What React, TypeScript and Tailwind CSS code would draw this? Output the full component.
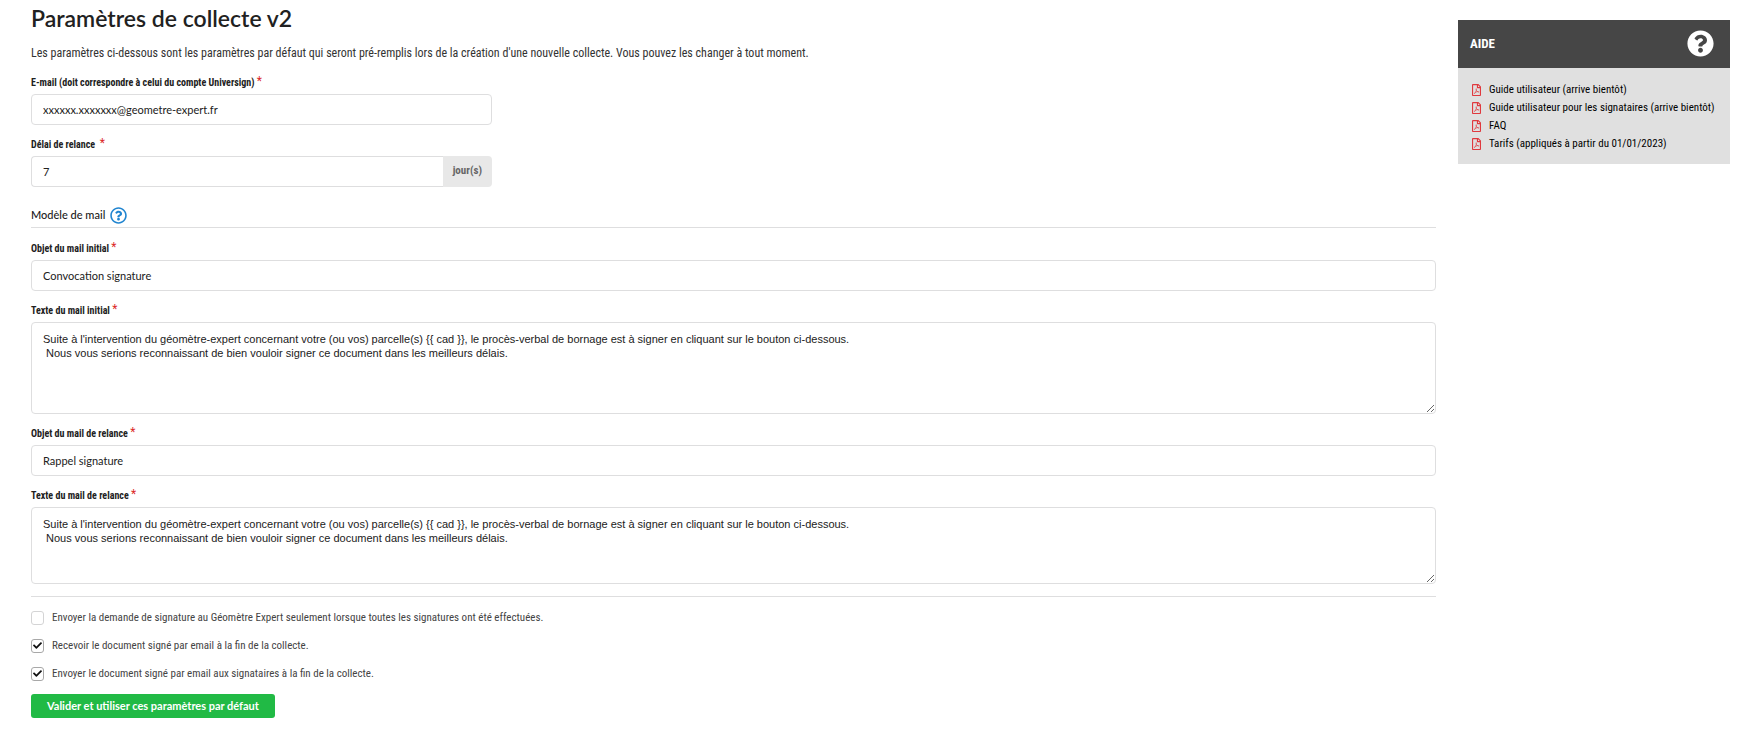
import { useState } from 'react';
import type { ReactNode } from 'react';
import { FaCheck, FaQuestionCircle, FaRegFilePdf, FaRegQuestionCircle } from 'react-icons/fa';

const MAIL_TEXT = `Suite à l'intervention du géomètre-expert concernant votre (ou vos) parcelle(s) {{ cad }}, le procès-verbal de bornage est à signer en cliquant sur le bouton ci-dessous.
 Nous vous serions reconnaissant de bien vouloir signer ce document dans les meilleurs délais.`;

const helpLinks = [
  'Guide utilisateur (arrive bientôt)',
  'Guide utilisateur pour les signataires (arrive bientôt)',
  'FAQ',
  'Tarifs (appliqués à partir du 01/01/2023)',
];

const options = [
  {
    id: 'expert-last',
    label: 'Envoyer la demande de signature au Géomètre Expert seulement lorsque toutes les signatures ont été effectuées.',
    checked: false,
  },
  { id: 'receive-doc', label: 'Recevoir le document signé par email à la fin de la collecte.', checked: true },
  { id: 'send-doc', label: 'Envoyer le document signé par email aux signataires à la fin de la collecte.', checked: true },
];

const inputClass =
  "block w-full h-[31px] px-[11px] border border-[#dededf] rounded font-['Lato',sans-serif] text-[11px] text-[#212121] bg-white focus:outline-none focus:border-[#85b7d9]";

const textareaClass =
  "block w-full px-[11px] py-[9px] border border-[#dededf] rounded font-['Liberation_Sans',sans-serif] text-[11px] leading-[14px] text-[#212121] bg-white resize-y focus:outline-none focus:border-[#85b7d9]";

interface FieldProps {
  id: string;
  label: string;
  children: ReactNode;
}

function Field({ id, label, children }: FieldProps) {
  return (
    <div>
      <label htmlFor={id} className="block h-[18px] mb-[3px] text-[10px] leading-[19px] font-bold text-[#212121]">
        {label} <span className="align-top text-[12px] leading-[16px] font-normal text-[#db2828]">*</span>
      </label>
      {children}
    </div>
  );
}

function Option({ id, label, checked }: { id: string; label: string; checked: boolean }) {
  const [on, setOn] = useState(checked);
  return (
    <div className="flex items-center gap-2 h-[14px]">
      <span className="relative block w-[13px] h-[14px]">
        <input
          id={id}
          type="checkbox"
          checked={on}
          onChange={(e) => setOn(e.target.checked)}
          className="block appearance-none w-[13px] h-[14px] border border-[#d4d4d5] checked:border-[#a8a8a8] rounded-[3px] bg-white"
        />
        {on && <FaCheck className="absolute top-[2px] left-[2px] w-[9px] h-[9px] text-[#111111] pointer-events-none" />}
      </span>
      <label htmlFor={id} className="text-[11px] leading-[14px] text-[#444444]">
        {label}
      </label>
    </div>
  );
}

function HelpPanel() {
  return (
    <aside className="w-[272px] shrink-0 mt-5">
      <div className="flex items-center justify-between h-12 pl-3 pr-4 pb-[1px] bg-[#464646] text-white">
        <h2 className="text-[13px] font-bold">AIDE</h2>
        <FaQuestionCircle className="w-[27px] h-[27px]" />
      </div>
      <ul className="px-[14px] pt-[13px] pb-[11px] bg-[#e0e0e0]">
        {helpLinks.map((link) => (
          <li key={link} className="h-[18px]">
            <a href="#" className="flex items-center gap-2 h-[18px] text-[11px] text-black whitespace-nowrap">
              <FaRegFilePdf className="w-[9px] h-3 shrink-0 text-[#e0393e]" />
              {link}
            </a>
          </li>
        ))}
      </ul>
    </aside>
  );
}

export default function App() {
  return (
    <div className="flex items-start gap-[22px] pl-[31px] pr-[9px] bg-white font-['Roboto_Condensed','Liberation_Sans_Narrow','Roboto',sans-serif]">
      <main className="flex-1 min-w-0">
        <h1 className="pt-1 font-['Lato',sans-serif] text-[23px] leading-[28px] font-semibold text-[#212121]">
          Paramètres de collecte v2
        </h1>
        <p className="mt-3 text-[12px] leading-[18px] text-[#333333]">
          Les paramètres ci-dessous sont les paramètres par défaut qui seront pré-remplis lors de la création d'une
          nouvelle collecte. Vous pouvez les changer à tout moment.
        </p>

        <form onSubmit={(e) => e.preventDefault()}>
          <div className="flex flex-col gap-[10px] w-[461px] mt-[11px]">
            <Field id="email" label="E-mail (doit correspondre à celui du compte Universign)">
              <input id="email" type="email" defaultValue="xxxxxx.xxxxxxx@geometre-expert.fr" className={inputClass} />
            </Field>
            <Field id="delay" label={'Délai de relance\u00a0'}>
              <div className="flex">
                <input id="delay" type="text" defaultValue="7" className={`${inputClass} rounded-r-none border-r-0`} />
                <span className="flex items-center h-[31px] px-[10px] rounded-r bg-[#e8e8e8] text-[11px] font-bold text-[#666666]">
                  jour(s)
                </span>
              </div>
            </Field>
          </div>

          <h2 className="flex items-center gap-[5px] mt-4 pt-[1px] h-[25px] border-b border-[#dededf] font-['Lato',sans-serif] text-[11px] font-medium text-[#212121]">
            Modèle de mail
            <FaRegQuestionCircle className="w-[17px] h-[17px] text-[#2185d0]" />
          </h2>

          <div className="flex flex-col gap-[10px] mt-[11px]">
            <Field id="subject" label="Objet du mail initial">
              <input id="subject" type="text" defaultValue="Convocation signature" className={inputClass} />
            </Field>
            <Field id="body" label="Texte du mail initial">
              <textarea id="body" defaultValue={MAIL_TEXT} className={`${textareaClass} h-[92px]`} />
            </Field>
            <Field id="reminder-subject" label="Objet du mail de relance">
              <input id="reminder-subject" type="text" defaultValue="Rappel signature" className={inputClass} />
            </Field>
            <Field id="reminder-body" label="Texte du mail de relance">
              <textarea id="reminder-body" defaultValue={MAIL_TEXT} className={`${textareaClass} h-[77px]`} />
            </Field>
          </div>

          <div className="flex flex-col gap-[14px] mt-3 pt-[14px] border-t border-[#dededf]">
            {options.map((option) => (
              <Option key={option.id} {...option} />
            ))}
          </div>

          <button
            type="submit"
            className="block h-6 mt-[13px] px-4 rounded-[3px] bg-[#21ba45] hover:bg-[#16ab39] font-['Lato',sans-serif] text-[11px] font-bold text-white"
          >
            Valider et utiliser ces paramètres par défaut
          </button>
        </form>
      </main>
      <HelpPanel />
    </div>
  );
}
